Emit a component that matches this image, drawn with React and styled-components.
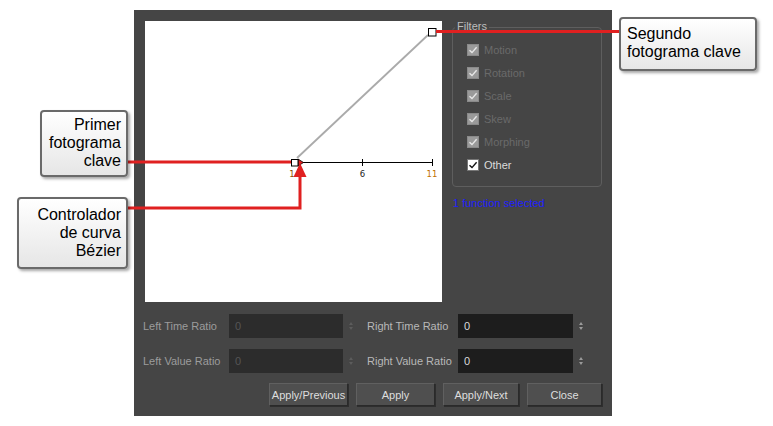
import React from "react";
import styled, { createGlobalStyle } from "styled-components";

const Global = createGlobalStyle`
  html, body { margin: 0; padding: 0; background: #ffffff; }
  body { font-family: "Liberation Sans", Arial, sans-serif; }
`;

const Page = styled.div`
  position: relative;
  width: 773px;
  height: 426px;
  overflow: hidden;
  background: #fff;
  padding: 10px 0 0 134px;
  box-sizing: border-box;
`;

const Dialog = styled.div`
  width: 478px;
  height: 406px;
  box-sizing: border-box;
  background: #454545;
  padding: 11px 10px 10px 11px;
  display: flex;
  flex-direction: column;
  font-family: "Liberation Sans", Arial, sans-serif;
  font-size: 11px;
`;

const Top = styled.div`
  display: flex;
  gap: 10px;
`;

const Canvas = styled.div`
  width: 297px;
  height: 281px;
  background: #fff;
  flex: none;
`;

const RightCol = styled.div`
  width: 150px;
  display: flex;
  flex-direction: column;
  padding-top: 6px;
`;

const GroupBox = styled.div`
  position: relative;
  height: 160px;
  box-sizing: border-box;
  border: 1px solid #5e5e5e;
  border-radius: 4px;
  padding: 10px 0 0 14px;
  display: flex;
  flex-direction: column;
`;

const Legend = styled.span`
  position: absolute;
  top: -8px;
  left: 2px;
  padding: 0 2px;
  background: #454545;
  color: #bdbdbd;
  line-height: 13px;
`;

const CheckRow = styled.div`
  height: 23px;
  display: flex;
  align-items: center;
  gap: 5px;
  color: ${(p) => (p.$disabled ? "#6a6a6a" : "#dcdcdc")};
`;

const Box = styled.span`
  width: 12px;
  height: 12px;
  box-sizing: border-box;
  background: ${(p) => (p.$disabled ? "#9a9a9a" : "#ffffff")};
  border: 1px solid ${(p) => (p.$disabled ? "#8a8a8a" : "#777")};
  display: flex;
  align-items: center;
  justify-content: center;
`;

const Selected = styled.div`
  margin-top: 10px;
  color: #1e1eff;
  line-height: 13px;
  padding-left: 1px;
`;

const Fields = styled.div`
  margin: 12px 0 0 -2px;
  display: grid;
  grid-template-columns: 86px 114px 24px 91px 115px 20px;
  grid-auto-rows: 24px;
  row-gap: 11px;
  align-items: center;
`;

const Label = styled.span`
  color: ${(p) => (p.$disabled ? "#9c9c9c" : "#b8b8b8")};
  white-space: nowrap;
`;

const Input = styled.div`
  height: 24px;
  box-sizing: border-box;
  background: ${(p) => (p.$disabled ? "#2c2c2c" : "#1d1d1d")};
  color: ${(p) => (p.$disabled ? "#555" : "#dadada")};
  padding-left: 6px;
  display: flex;
  align-items: center;
`;

const Spin = styled.span`
  display: flex;
  flex-direction: column;
  align-items: center;
  gap: 2px;
  width: 16px;
  &::before, &::after {
    content: "";
    width: 0;
    height: 0;
    border-left: 2.5px solid transparent;
    border-right: 2.5px solid transparent;
  }
  &::before { border-bottom: 3px solid ${(p) => (p.$disabled ? "#5c5c5c" : "#9a9a9a")}; }
  &::after { border-top: 3px solid ${(p) => (p.$disabled ? "#5c5c5c" : "#9a9a9a")}; }
`;

const Buttons = styled.div`
  margin-top: 10px;
  display: flex;
  justify-content: flex-end;
  gap: 8px;
`;

const Button = styled.div`
  width: ${(p) => p.$w}px;
  height: 23px;
  box-sizing: border-box;
  background: #4f4f4f;
  border: 1px solid #2a2a2a;
  border-top-color: #606060;
  border-left-color: #606060;
  box-shadow: 1px 1px 0 #2e2e2e;
  color: #dedede;
  display: flex;
  align-items: center;
  justify-content: center;
`;

const Callout = styled.div`
  position: absolute;
  left: ${(p) => p.$x}px;
  top: ${(p) => p.$y}px;
  width: ${(p) => p.$w}px;
  height: ${(p) => p.$h}px;
  box-sizing: border-box;
  border: 2px solid #6a6a6a;
  border-radius: 4px;
  background: linear-gradient(#ffffff, #e6e6e6);
  box-shadow: 2px 2px 3px rgba(0, 0, 0, 0.35);
  font-family: "Liberation Sans", Arial, sans-serif;
  font-size: 16px;
  line-height: 18px;
  color: #000;
  text-align: ${(p) => p.$align};
  padding: ${(p) => p.$pad};
  white-space: nowrap;
`;

const Overlay = styled.svg`
  position: absolute;
  left: 0;
  top: 0;
  pointer-events: none;
`;

const Check = ({ dark }) => (
  <svg width="10" height="10" viewBox="0 0 10 10">
    <path d="M1.5 5.2 L4 7.6 L8.6 2.2" fill="none" stroke={dark ? "#111" : "#e8e8e8"} strokeWidth="1.4" />
  </svg>
);

const filters = ["Motion", "Rotation", "Scale", "Skew", "Morphing"];

export default function App() {
  return (
    <>
      <Global />
      <Page>
        <Dialog>
          <Top>
            <Canvas>
              <svg width="297" height="281" viewBox="0 0 297 281">
                <path d="M152 137 L283 14" stroke="#aaaaaa" strokeWidth="1.8" fill="none" />
                <line x1="153" y1="141.5" x2="287" y2="141.5" stroke="#000" strokeWidth="1" />
                <line x1="217.5" y1="138" x2="217.5" y2="145" stroke="#000" strokeWidth="1" />
                <line x1="287.5" y1="138" x2="287.5" y2="145" stroke="#000" strokeWidth="1" />
                <path d="M153 138 L158.5 141.5 L153 145 Z" fill="#e02020" stroke="#000" strokeWidth="0.8" />
                <rect x="146.5" y="138.5" width="6.5" height="6.5" fill="#fff" stroke="#000" strokeWidth="1" />
                <rect x="283.5" y="7.5" width="7.5" height="7.5" fill="#fff" stroke="#000" strokeWidth="1" />
                <text x="147" y="156" fontSize="8.5" fill="#8a5200" fontFamily="DejaVu Sans, sans-serif" textAnchor="middle">1</text>
                <text x="217.5" y="156" fontSize="8.5" fill="#222" fontFamily="DejaVu Sans, sans-serif" textAnchor="middle">6</text>
                <text x="287" y="156" fontSize="8.5" fill="#c07000" fontFamily="DejaVu Sans, sans-serif" textAnchor="middle">11</text>
              </svg>
            </Canvas>
            <RightCol>
              <GroupBox>
                <Legend>Filters</Legend>
                {filters.map((f) => (
                  <CheckRow key={f} $disabled>
                    <Box $disabled>
                      <Check />
                    </Box>
                    {f}
                  </CheckRow>
                ))}
                <CheckRow>
                  <Box>
                    <Check dark />
                  </Box>
                  Other
                </CheckRow>
              </GroupBox>
              <Selected>1 function selected</Selected>
            </RightCol>
          </Top>
          <Fields>
            <Label $disabled>Left Time Ratio</Label>
            <Input $disabled>0</Input>
            <Spin $disabled />
            <Label>Right Time Ratio</Label>
            <Input>0</Input>
            <Spin />
            <Label $disabled>Left Value Ratio</Label>
            <Input $disabled>0</Input>
            <Spin $disabled />
            <Label>Right Value Ratio</Label>
            <Input>0</Input>
            <Spin />
          </Fields>
          <Buttons>
            <Button $w={79}>Apply/Previous</Button>
            <Button $w={79}>Apply</Button>
            <Button $w={76}>Apply/Next</Button>
            <Button $w={75}>Close</Button>
          </Buttons>
        </Dialog>

        <Overlay width="773" height="426" viewBox="0 0 773 426">
          <line x1="125" y1="162" x2="291" y2="162" stroke="#e02020" strokeWidth="3" />
          <polyline points="125,208 300,208 300,174" fill="none" stroke="#e02020" strokeWidth="3" />
          <path d="M293.5 177 L306.5 177 L300 163 Z" fill="#e02020" />
          <line x1="436" y1="31.5" x2="622" y2="31.5" stroke="#e02020" strokeWidth="3" />
        </Overlay>

        <Callout $x={40} $y={110} $w={88} $h={67} $align="right" $pad="4px 5px 0 4px">
          Primer<br />fotograma<br />clave
        </Callout>
        <Callout $x={17} $y={197} $w={111} $h={72} $align="right" $pad="7px 5px 0 4px">
          Controlador<br />de curva<br />Bézier
        </Callout>
        <Callout $x={619} $y={17} $w={138} $h={54} $align="left" $pad="6px 4px 0 6px">
          Segundo<br />fotograma clave
        </Callout>
      </Page>
    </>
  );
}
